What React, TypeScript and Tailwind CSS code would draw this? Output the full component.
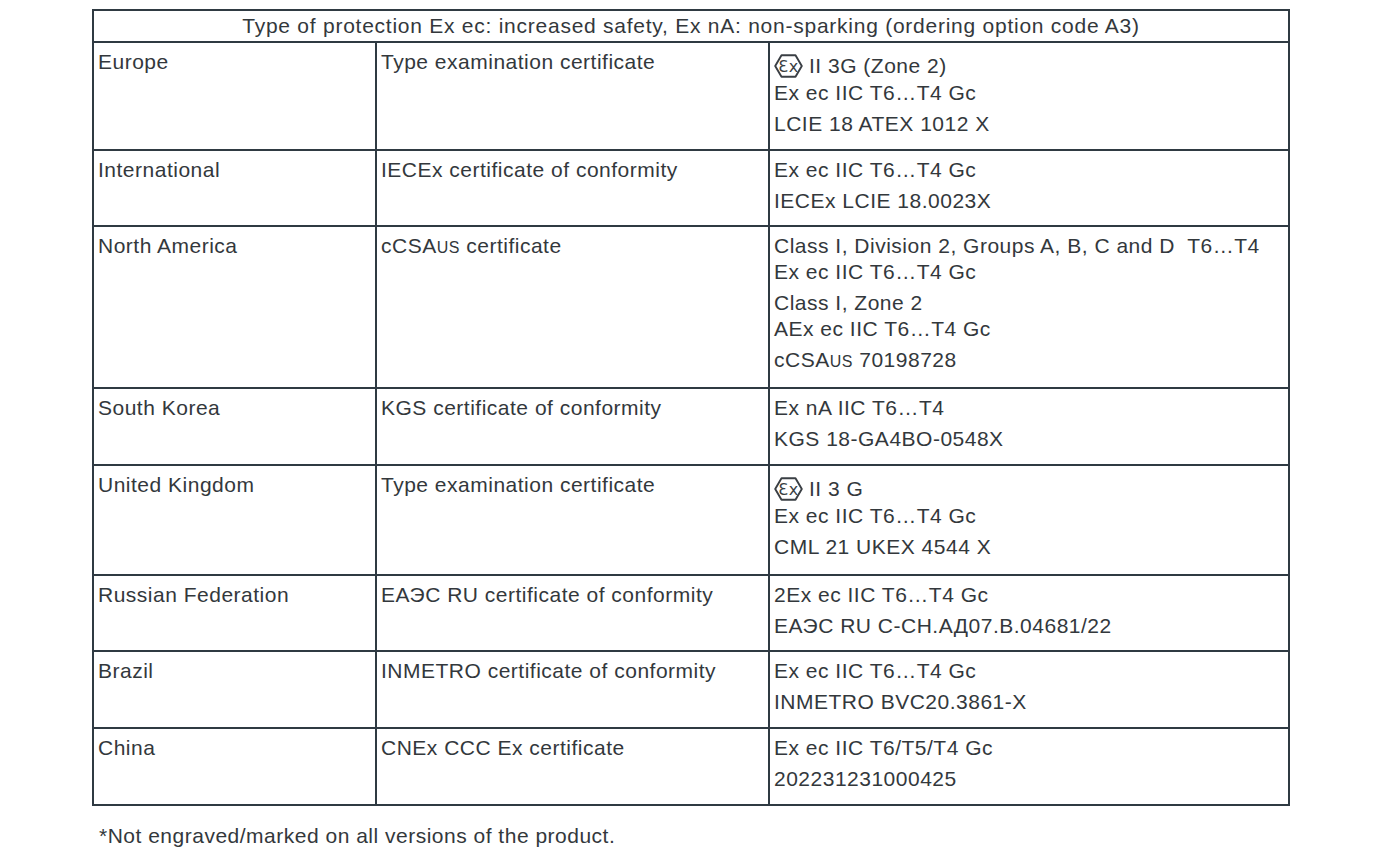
import React from "react";

// Ex hexagon mark used in ATEX / UKEX markings
const ExMark = () => (
  <svg width="29" height="24" viewBox="0 0 29 24" className="mr-[6px] shrink-0">
    <polygon
      points="7.5,1.2 21.5,1.2 27.8,12 21.5,22.8 7.5,22.8 1.2,12"
      fill="none"
      stroke="#3a3f44"
      strokeWidth="1.9"
      strokeLinejoin="round"
    />
    <text
      x="14.5"
      y="17.5"
      textAnchor="middle"
      fontSize="16"
      fontFamily="'DejaVu Sans', 'Liberation Sans', sans-serif"
      fill="#3a3f44"
    >
      Ɛx
    </text>
  </svg>
);

const Csa = () => (
  <>
    cCSA<span className="text-[16px]">US</span>
  </>
);

type Row = {
  region: string;
  cert: React.ReactNode;
  marks: React.ReactNode[][];
  exLine?: string;
  pad: string;
};

const rows: Row[] = [
  {
    region: "Europe",
    cert: "Type examination certificate",
    exLine: "II 3G (Zone 2)",
    marks: [["Ex ec IIC T6…T4 Gc"], ["LCIE 18 ATEX 1012 X"]],
    pad: "pb-[12px]",
  },
  {
    region: "International",
    cert: "IECEx certificate of conformity",
    marks: [["Ex ec IIC T6…T4 Gc"], ["IECEx LCIE 18.0023X"]],
    pad: "pb-[11px]",
  },
  {
    region: "North America",
    cert: (
      <>
        <Csa /> certificate
      </>
    ),
    marks: [
      ["Class I, Division 2, Groups A, B, C and D\u00a0 T6…T4", "Ex ec IIC T6…T4 Gc"],
      ["Class I, Zone 2", "AEx ec IIC T6…T4 Gc"],
      [
        <>
          <Csa /> 70198728
        </>,
      ],
    ],
    pad: "pb-[12px]",
  },
  {
    region: "South Korea",
    cert: "KGS certificate of conformity",
    marks: [["Ex nA IIC T6…T4"], ["KGS 18-GA4BO-0548X"]],
    pad: "pb-[12px]",
  },
  {
    region: "United Kingdom",
    cert: "Type examination certificate",
    exLine: "II 3 G",
    marks: [["Ex ec IIC T6…T4 Gc"], ["CML 21 UKEX 4544 X"]],
    pad: "pb-[14px]",
  },
  {
    region: "Russian Federation",
    cert: "ЕАЭС RU certificate of conformity",
    marks: [["2Ex ec IIC T6…T4 Gc"], ["ЕАЭС RU C-CH.АД07.В.04681/22"]],
    pad: "pb-[11px]",
  },
  {
    region: "Brazil",
    cert: "INMETRO certificate of conformity",
    marks: [["Ex ec IIC T6…T4 Gc"], ["INMETRO BVC20.3861-X"]],
    pad: "pb-[12px]",
  },
  {
    region: "China",
    cert: "CNEx CCC Ex certificate",
    marks: [["Ex ec IIC T6/T5/T4 Gc"], ["202231231000425"]],
    pad: "pb-[12px]",
  },
];

const cell = "border-2 border-[#2f3a42] align-top px-[4px] pt-[6px]";

export default function App() {
  return (
    <div className="min-h-screen bg-white pt-[9px] pl-[92px] text-[21px] leading-[26px] tracking-[0.5px] text-[#33383c] [font-family:'Liberation_Sans',Arial,sans-serif]">
      <table className="w-[1196px] table-fixed border-collapse">
        <colgroup>
          <col className="w-[283px]" />
          <col className="w-[393px]" />
          <col className="w-[520px]" />
        </colgroup>
        <thead>
          <tr>
            <th colSpan={3} className="border-2 border-[#2f3a42] py-[2px] text-center font-normal tracking-[0.75px]">
              Type of protection Ex ec: increased safety, Ex nA: non-sparking (ordering option code A3)
            </th>
          </tr>
        </thead>
        <tbody>
          {rows.map((r) => (
            <tr key={r.region}>
              <td className={`${cell} ${r.pad}`}>{r.region}</td>
              <td className={`${cell} ${r.pad}`}>{r.cert}</td>
              <td className={`${cell} ${r.pad}`}>
                {r.exLine && (
                  <div className="flex h-[31px] items-center pt-[3px]">
                    <ExMark />
                    {r.exLine}
                  </div>
                )}
                {r.marks.map((group, i) => (
                  <div key={i} className={i > 0 ? "mt-[5px]" : ""}>
                    {group.map((line, j) => (
                      <div key={j}>{line}</div>
                    ))}
                  </div>
                ))}
              </td>
            </tr>
          ))}
        </tbody>
      </table>
      <p className="mt-[17px] pl-[7px]">*Not engraved/marked on all versions of the product.</p>
    </div>
  );
}
